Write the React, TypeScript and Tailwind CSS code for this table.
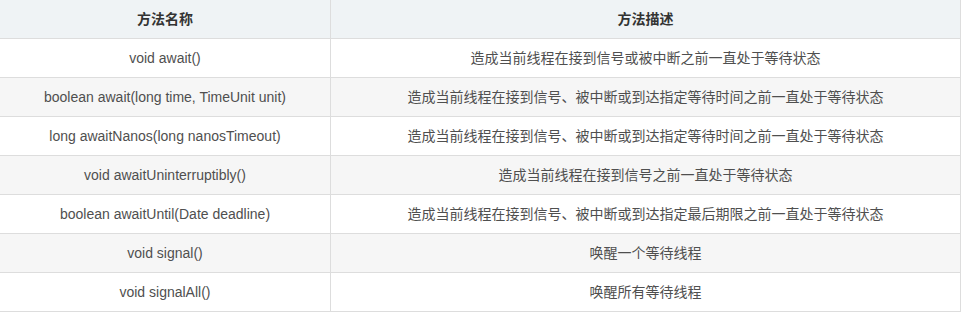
import React from "react";

const rows: [string, string][] = [
  ["void await()", "造成当前线程在接到信号或被中断之前一直处于等待状态"],
  ["boolean await(long time, TimeUnit unit)", "造成当前线程在接到信号、被中断或到达指定等待时间之前一直处于等待状态"],
  ["long awaitNanos(long nanosTimeout)", "造成当前线程在接到信号、被中断或到达指定等待时间之前一直处于等待状态"],
  ["void awaitUninterruptibly()", "造成当前线程在接到信号之前一直处于等待状态"],
  ["boolean awaitUntil(Date deadline)", "造成当前线程在接到信号、被中断或到达指定最后期限之前一直处于等待状态"],
  ["void signal()", "唤醒一个等待线程"],
  ["void signalAll()", "唤醒所有等待线程"],
];

export default function App() {
  return (
    <div
      className="w-[962px] h-[313px] bg-white text-[14px] text-[#4f4f4f]"
      style={{ fontFamily: '"Liberation Sans", "Noto Sans CJK SC", sans-serif' }}
    >
      <div className="w-[961px]">
        <div className="flex bg-[#eff3f5] border-b border-[#dddddd] font-bold text-[#333333]">
          <div className="w-[331px] h-[38px] flex items-center justify-center border-r border-[#dddddd]">方法名称</div>
          <div className="w-[630px] h-[38px] flex items-center justify-center border-r border-[#dddddd]">方法描述</div>
        </div>
        {rows.map(([a, b], i) => (
          <div
            key={i}
            className={`flex border-b border-[#dddddd] ${i % 2 === 1 ? "bg-[#f6f6f6]" : "bg-white"}`}
          >
            <div className="w-[331px] h-[38px] flex items-center justify-center border-r border-[#dddddd]">{a}</div>
            <div className="w-[630px] h-[38px] flex items-center justify-center border-r border-[#dddddd]">{b}</div>
          </div>
        ))}
      </div>
    </div>
  );
}
